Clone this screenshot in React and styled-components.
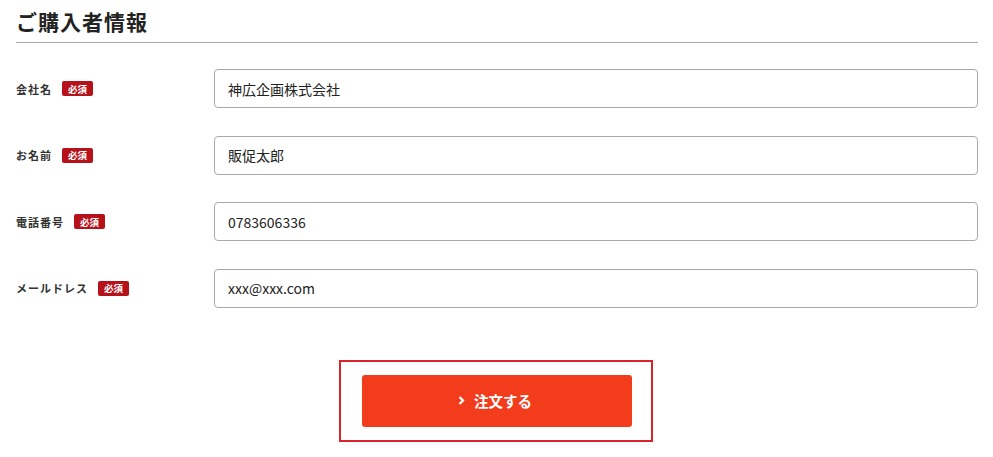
import React from "react";
import styled, { createGlobalStyle } from "styled-components";

const Global = createGlobalStyle`
  html, body { margin: 0; padding: 0; background: #fff; }
  body { font-family: "Noto Sans CJK JP", "Noto Sans", sans-serif; color: #222; }
  * { box-sizing: border-box; }
`;

const Page = styled.div`
  width: 993px;
  padding: 0 15px 0 16px;
`;

const Heading = styled.h2`
  margin: 0;
  padding-top: 6px;
  height: 43px;
  font-size: 21px;
  line-height: 30px;
  font-weight: 700;
  color: #222;
  border-bottom: 1px solid #a8a8a8;
  letter-spacing: 1px;
`;

const Form = styled.div`
  display: flex;
  flex-direction: column;
  gap: 27.5px;
  padding-top: 26px;
`;

const Row = styled.div`
  display: grid;
  grid-template-columns: 198px 1fr;
  align-items: center;
`;

const LabelWrap = styled.div`
  display: flex;
  align-items: center;
  gap: 10px;
`;

const Label = styled.span`
  font-size: 11px;
  font-weight: 700;
  color: #333;
  letter-spacing: 1px;
`;

const Badge = styled.span`
  display: inline-flex;
  align-items: center;
  justify-content: center;
  width: 31px;
  height: 15px;
  border-radius: 2px;
  background: #b5121b;
  color: #fff;
  font-size: 9.5px;
  font-weight: 700;
`;

const Input = styled.input`
  width: 100%;
  height: 39px;
  border: 1px solid #a9a9a9;
  border-radius: 4px;
  padding: 0 13px;
  font-family: "Noto Sans CJK JP", "Noto Sans", sans-serif;
  font-size: 14px;
  color: #222;
  outline: none;
`;

const Actions = styled.div`
  display: flex;
  justify-content: center;
  padding: 52px 2px 0 0;
`;

const Outline = styled.div`
  width: 314px;
  height: 82px;
  border: 2px solid #d7242a;
  padding: 13px 0 0 21px;
`;

const Submit = styled.button`
  width: 270px;
  height: 52px;
  border: none;
  border-radius: 3px;
  background: #f23c1b;
  color: #fff;
  font-family: "Noto Sans CJK JP", "Noto Sans", sans-serif;
  font-size: 14.5px;
  font-weight: 700;
  display: flex;
  align-items: center;
  justify-content: center;
  gap: 9px;
  cursor: pointer;
  padding: 0 4px 0 0;
`;

const fields = [
  { label: "会社名", value: "神広企画株式会社" },
  { label: "お名前", value: "販促太郎" },
  { label: "電話番号", value: "0783606336" },
  { label: "メールドレス", value: "xxx@xxx.com" },
];

export default function App() {
  return (
    <Page>
      <Global />
      <Heading>ご購入者情報</Heading>
      <Form>
        {fields.map((f) => (
          <Row key={f.label}>
            <LabelWrap>
              <Label>{f.label}</Label>
              <Badge>必須</Badge>
            </LabelWrap>
            <Input defaultValue={f.value} />
          </Row>
        ))}
      </Form>
      <Actions>
        <Outline>
          <Submit>
            <svg width="7" height="9" viewBox="0 0 7 9">
              <path d="M1.5 1 L5 4.5 L1.5 8" fill="none" stroke="#fff" strokeWidth="2.2" />
            </svg>
            注文する
          </Submit>
        </Outline>
      </Actions>
    </Page>
  );
}
